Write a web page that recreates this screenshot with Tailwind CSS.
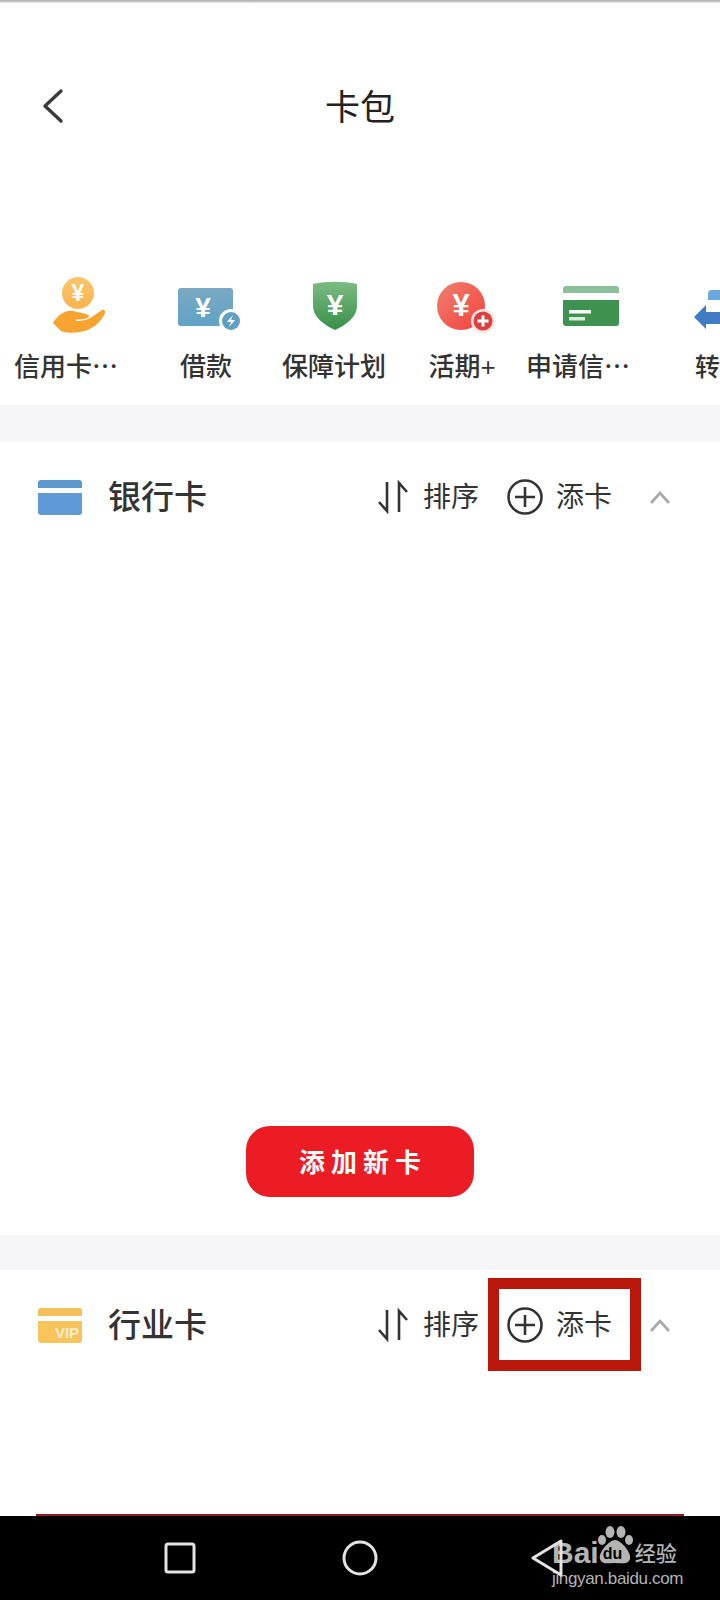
<!DOCTYPE html>
<html lang="zh-CN">
<head>
  <meta charset="UTF-8" />
  <meta name="viewport" content="width=device-width, initial-scale=1.0" />
  <title>卡包</title>
  <script src="https://cdn.jsdelivr.net/npm/@tailwindcss/browser@4"></script>
</head>
<body class="bg-white font-['Liberation_Sans','Noto_Sans_CJK_SC',sans-serif] text-[#333]">
  <div class="relative flex flex-col w-[720px] h-[1600px] overflow-hidden">
    <div class="h-[3px] bg-gradient-to-b from-[#a8a8a8] to-[#ececec] shrink-0"></div>

    <!-- header -->
    <div class="relative flex items-center justify-center h-[209px] shrink-0">
      <svg class="absolute left-[40px] top-[85px]" width="26" height="36" viewBox="0 0 26 36" fill="none" stroke="#3a3a3a" stroke-width="3.4" stroke-linecap="round" stroke-linejoin="round"><path d="M21 3 L5 18 L21 33" /></svg>
      <span class="text-[35px] leading-none text-[#222]">卡包</span>
    </div>

    <!-- shortcuts -->
    <div class="flex overflow-hidden pl-[14px] pt-[62px] h-[193px] shrink-0">
      <div class="w-[128px] shrink-0 flex flex-col items-center">
        <svg class="overflow-visible" width="64" height="62" viewBox="0 0 64 62">
          <defs><linearGradient id="coinFill" x1="0" y1="0" x2="0" y2="1"><stop offset="0" stop-color="#fbc56e" /><stop offset="1" stop-color="#f9b44c" /></linearGradient></defs>
          <circle cx="32" cy="19" r="16" fill="url(#coinFill)" />
          <text x="32" y="27" text-anchor="middle" font-size="23" font-weight="700" fill="#fff" font-family="Liberation Sans">¥</text>
          <path d="M7 49 C12 41 19 36 27 37 L40 40 C44 41 44 44 40 45 L46 43 L56 36 C59 35 60 38 58 41 C54 49 46 56 34 58 C26 59 20 59 15 57 Z" fill="#f6a32f" />
          <path d="M30 46 Q38 47 45 43" fill="none" stroke="#fff" stroke-width="1.4" />
        </svg>
        <span class="mt-[14px] pr-[24px] text-[26px] leading-[34px] font-medium whitespace-nowrap">信用卡⋯</span>
      </div>
      <div class="w-[128px] shrink-0 flex flex-col items-center">
        <svg class="overflow-visible" width="64" height="62" viewBox="0 0 64 62">
          <defs><linearGradient id="loanFill" x1="0" y1="0" x2="0" y2="1"><stop offset="0" stop-color="#7aa9c2" /><stop offset="1" stop-color="#5fa3c6" /></linearGradient></defs>
          <rect x="4" y="14" width="55" height="38" rx="3" fill="url(#loanFill)" />
          <text x="29" y="43" text-anchor="middle" font-size="28" font-weight="700" fill="#fff" font-family="Liberation Sans">¥</text>
          <circle cx="57" cy="47" r="12" fill="#fff" />
          <circle cx="57" cy="47" r="9" fill="#5f9fc2" />
          <path d="M59 41 L53 48 L57 48 L55 53 L61 46 L57 46 Z" fill="#fff" />
        </svg>
        <span class="mt-[14px] text-[26px] leading-[34px] font-medium whitespace-nowrap">借款</span>
      </div>
      <div class="w-[128px] shrink-0 flex flex-col items-center">
        <svg width="64" height="62" viewBox="0 0 64 62">
          <defs><linearGradient id="shieldFill" x1="0" y1="0" x2="0" y2="1"><stop offset="0" stop-color="#7dbb84" /><stop offset="1" stop-color="#379048" /></linearGradient></defs>
          <path d="M11 10 C24 7 42 7 55 10 L55 32 C55 43 44 51 33 56 C22 51 11 43 11 32 Z" fill="url(#shieldFill)" />
          <text x="33" y="41" text-anchor="middle" font-size="30" font-weight="700" fill="#fff" font-family="Liberation Sans">¥</text>
        </svg>
        <span class="mt-[14px] text-[26px] leading-[34px] font-medium whitespace-nowrap">保障计划</span>
      </div>
      <div class="w-[128px] shrink-0 flex flex-col items-center">
        <svg class="overflow-visible" width="64" height="62" viewBox="0 0 64 62">
          <defs><linearGradient id="redFill" x1="0" y1="0" x2="1" y2="1"><stop offset="0" stop-color="#f08070" /><stop offset="1" stop-color="#f4403c" /></linearGradient></defs>
          <circle cx="31" cy="32" r="24" fill="url(#redFill)" />
          <text x="31" y="42" text-anchor="middle" font-size="31" font-weight="700" fill="#fff" font-family="Liberation Sans">¥</text>
          <circle cx="53" cy="47" r="12" fill="#f7e4e0" />
          <circle cx="53" cy="47" r="9.5" fill="#d9403f" />
          <path d="M47.5 47 H58.5 M53 41.5 V52.5" stroke="#fff" stroke-width="3" />
        </svg>
        <span class="mt-[14px] text-[26px] leading-[34px] font-medium whitespace-nowrap">活期+</span>
      </div>
      <div class="w-[128px] shrink-0 flex flex-col items-center">
        <svg width="64" height="62" viewBox="0 0 64 62">
          <path d="M5 19 V15 Q5 12 8 12 H58 Q61 12 61 15 V19 Z" fill="#8cc09a" />
          <path d="M5 26 H61 V49 Q61 52 58 52 H8 Q5 52 5 49 Z" fill="#3f9150" />
          <rect x="11" y="36" width="22" height="3.5" fill="#fff" />
          <rect x="11" y="43" width="16" height="3.5" fill="#d8ecdc" />
        </svg>
        <span class="mt-[14px] pr-[24px] text-[26px] leading-[34px] font-medium whitespace-nowrap">申请信⋯</span>
      </div>
      <div class="w-[128px] shrink-0 flex flex-col items-start pl-[32px]">
        <svg class="overflow-visible" width="64" height="62" viewBox="0 0 64 62">
          <path d="M22 20 Q22 16 26 16 H60 V26 H22 Z" fill="#6ba8e0" />
          <path d="M8 43 L20 31 V38 H60 V50 H20 V55 Z" fill="#3f7cc4" />
        </svg>
        <span class="mt-[14px] ml-[9px] w-[25px] text-[25px] leading-[34px] font-medium whitespace-nowrap">转</span>
      </div>
    </div>

    <div class="h-[37px] bg-[#f6f6f8] shrink-0"></div>

    <!-- bank cards -->
    <section class="flex flex-col h-[793px] shrink-0">
      <div class="flex items-center h-[110px] pl-[38px] pr-[50px] shrink-0">
        <svg width="44" height="35" viewBox="0 0 44 35">
          <path d="M0 8 V3 Q0 0 3 0 H41 Q44 0 44 3 V8 Z" fill="#5f97cf" />
          <path d="M0 13 H44 V32 Q44 35 41 35 H3 Q0 35 0 32 Z" fill="#5f9ad6" />
        </svg>
        <h2 class="ml-[26px] text-[33px] leading-none font-medium">银行卡</h2>
        <div class="ml-auto flex items-center">
          <svg width="32" height="34" viewBox="0 0 32 34" fill="none" stroke="#333" stroke-width="2.6"><path d="M10 2 V31 L2 22 M22 32 V3 L30 12" /></svg>
          <span class="ml-[14px] w-[56px] pt-[2px] text-[28px] leading-none whitespace-nowrap">排序</span>
          <svg class="ml-[28px]" width="36" height="36" viewBox="0 0 36 36" fill="none" stroke="#333" stroke-width="2.6"><circle cx="18" cy="18" r="16.5" /><path d="M8 18 H28 M18 8 V28" /></svg>
          <span class="ml-[13px] w-[56px] pt-[2px] text-[28px] leading-none whitespace-nowrap">添卡</span>
          <svg class="ml-[38px]" width="20" height="14" viewBox="0 0 20 14" fill="none" stroke="#a9a9a9" stroke-width="2.8"><path d="M1 13 L10 3 L19 13" /></svg>
        </div>
      </div>
      <div class="flex-1 flex items-end justify-center pb-[38px]">
        <button class="w-[228px] h-[71px] pt-[4px] pl-[6px] rounded-[24px] bg-[#ec1c24] text-white text-[26px] font-bold tracking-[6px]">添加新卡</button>
      </div>
    </section>

    <div class="h-[35px] bg-[#f6f6f8] shrink-0"></div>

    <!-- industry cards -->
    <section class="relative flex flex-col flex-1">
      <div class="flex items-center h-[110px] pl-[38px] pr-[50px] shrink-0">
        <svg width="44" height="35" viewBox="0 0 44 35">
          <path d="M0 8 V3 Q0 0 3 0 H41 Q44 0 44 3 V8 Z" fill="#f6bf5a" />
          <path d="M0 13 H44 V32 Q44 35 41 35 H3 Q0 35 0 32 Z" fill="#f9c45c" />
          <text x="29" y="30" text-anchor="middle" font-size="15" font-weight="700" fill="#fff" fill-opacity="0.7" font-family="Liberation Sans">VIP</text>
        </svg>
        <h2 class="ml-[26px] text-[33px] leading-none font-medium">行业卡</h2>
        <div class="ml-auto flex items-center">
          <svg width="32" height="34" viewBox="0 0 32 34" fill="none" stroke="#333" stroke-width="2.6"><path d="M10 2 V31 L2 22 M22 32 V3 L30 12" /></svg>
          <span class="ml-[14px] w-[56px] pt-[2px] text-[28px] leading-none whitespace-nowrap">排序</span>
          <svg class="ml-[28px]" width="36" height="36" viewBox="0 0 36 36" fill="none" stroke="#333" stroke-width="2.6"><circle cx="18" cy="18" r="16.5" /><path d="M8 18 H28 M18 8 V28" /></svg>
          <span class="ml-[13px] w-[56px] pt-[2px] text-[28px] leading-none whitespace-nowrap">添卡</span>
          <svg class="ml-[38px]" width="20" height="14" viewBox="0 0 20 14" fill="none" stroke="#a9a9a9" stroke-width="2.8"><path d="M1 13 L10 3 L19 13" /></svg>
        </div>
      </div>
      <div class="mt-auto mx-[36px] h-[2px] bg-[#8c1c20]"></div>
      <!-- annotation box -->
      <div class="absolute left-[488px] top-[8px] w-[153px] h-[93px] border-[11px] border-[#b9170c]"></div>
    </section>

    <!-- system nav bar -->
    <nav class="relative flex items-center h-[84px] bg-black shrink-0">
      <svg class="absolute left-[164px] top-[26px]" width="32" height="32" viewBox="0 0 32 32" fill="none" stroke="#e4e4e4" stroke-width="3"><rect x="2" y="2" width="28" height="28" rx="2" /></svg>
      <svg class="absolute left-[342px] top-[24px]" width="36" height="36" viewBox="0 0 36 36" fill="none" stroke="#e4e4e4" stroke-width="3"><circle cx="18" cy="18" r="16" /></svg>

      <!-- watermark -->
      <div class="absolute left-[552px] top-[5px] flex flex-col text-[#b4b4b4]">
        <div class="flex items-end h-[47px]">
          <span class="text-[30px] leading-[30px] font-bold">Bai</span>
          <div class="relative w-[36px] h-[40px] -ml-[2px] mb-[2px]">
            <svg class="absolute inset-0" width="36" height="40" viewBox="0 0 36 40" fill="#b4b4b4">
              <ellipse cx="5" cy="14" rx="4" ry="5" />
              <ellipse cx="13" cy="6" rx="4.5" ry="6" />
              <ellipse cx="24" cy="6" rx="4.5" ry="6" />
              <ellipse cx="32" cy="14" rx="4" ry="5" />
              <path d="M18 14 C24 14 35 27 33 33 C31 39 24 37 18 37 C12 37 5 39 3 33 C1 27 12 14 18 14 Z" />
            </svg>
            <span class="absolute left-[6px] bottom-[3px] text-[16px] leading-[18px] font-bold text-black">du</span>
          </div>
          <span class="ml-[2px] text-[21px] leading-[28px] font-medium whitespace-nowrap">经验</span>
        </div>
        <span class="text-[17px] leading-[22px] tracking-[-0.35px] whitespace-nowrap">jingyan.baidu.com</span>
      </div>

      <!-- back triangle sits over the watermark -->
      <svg class="absolute left-[530px] top-[23px]" width="36" height="38" viewBox="0 0 36 38" fill="none" stroke="#e4e4e4" stroke-width="3" stroke-linejoin="round"><path d="M31 2 L3 19 L31 36 Z" /></svg>
    </nav>
  </div>
</body>
</html>
